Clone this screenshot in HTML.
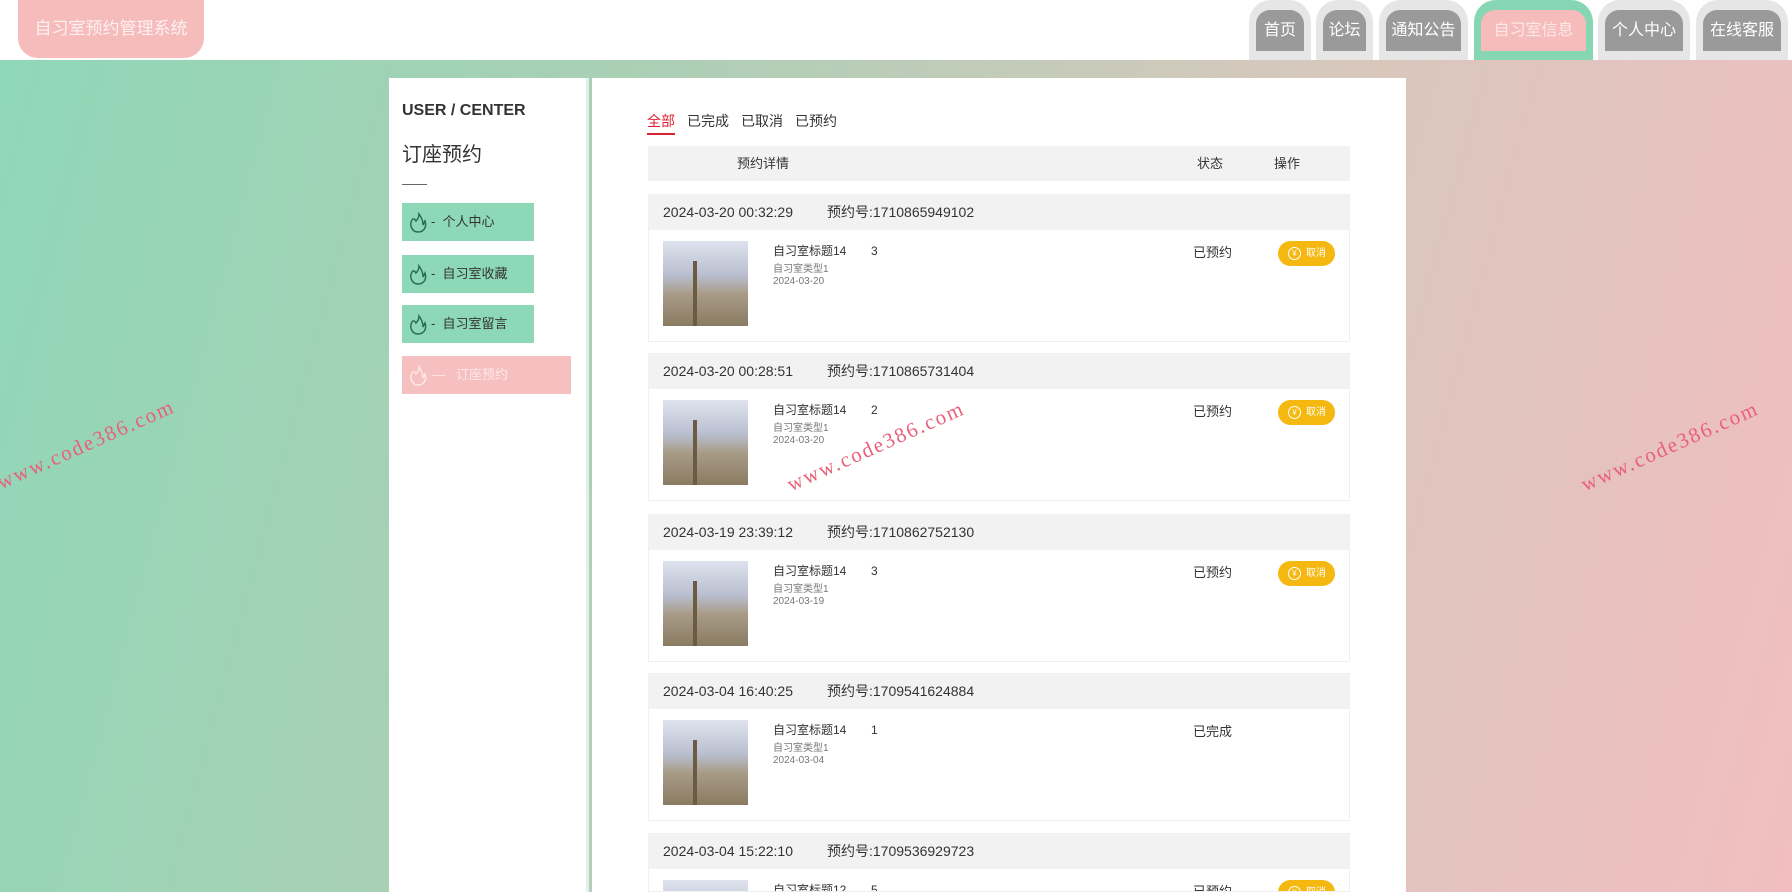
<!DOCTYPE html>
<html style="width:1792px;height:892px;overflow:hidden"><head><meta charset="utf-8"><style>
*{margin:0;padding:0;box-sizing:border-box}
body{width:1792px;height:892px;overflow:hidden;font-family:"Liberation Sans","Noto Sans CJK SC",sans-serif;color:#333;background:linear-gradient(105deg,#8ed8b8 0%,#a8d0b4 30%,#d6c8bc 65%,#f2bec0 100%);position:relative}
.hdr{position:absolute;left:0;top:0;width:1792px;height:60px;background:#fff}
.logo{position:absolute;left:18px;top:0;width:186px;height:58px;background:#f6bcbc;border-radius:0 0 20px 20px;color:#fdf0f0;font-size:17px;line-height:58px;text-align:center}
.tab{position:absolute;top:0;height:60px;background:#e6e6e6;border-radius:22px 22px 0 0}
.tab span{position:absolute;left:7px;right:7px;top:10px;height:41px;background:#9a9a9a;border-radius:14px 14px 0 0;color:#fff;font-size:16px;line-height:41px;text-align:center}
.tab.on{background:#86d6b4}.tab.on span{background:#f6bcbc;color:#fde8e8}
.side{position:absolute;left:389px;top:78px;width:200px;height:814px;background:#fff;border-right:3px solid #dff0ee}
.main{position:absolute;left:592px;top:78px;width:814px;height:814px;background:#fff;overflow:hidden}
.uc{position:absolute;left:13px;top:24px;font-weight:bold;font-size:16px;color:#333}
.tt{position:absolute;left:13px;top:60px;font-size:20px;color:#333}
.ln{position:absolute;left:13px;top:106px;width:25px;border-top:1px solid #666}
.mi{position:absolute;left:13px;width:132px;height:38px;background:#8dd8b6;font-size:13px;line-height:38px;padding-left:29px;color:#333}
.mi i{position:absolute;left:6px;top:8px;width:20px;height:22px}
.mi.on{background:#f6c0c0;width:169px;color:#fde8e8;padding-left:30px}
.tabs{position:absolute;left:55px;top:33px;font-size:14px}
.tabs b{font-weight:normal;margin-right:12px;display:inline-block;padding-bottom:2px}
.tabs b.a{color:#d23;border-bottom:2px solid #d23}
.th{position:absolute;left:56px;top:68px;width:702px;height:35px;background:#f2f2f2;font-size:13px;line-height:35px}
.card{position:absolute;left:56px;width:702px;height:148px;border:1px solid #f0f0f0;overflow:hidden}
.ch{height:35px;background:#f2f2f2;font-size:14px;line-height:35px;padding-left:14px}
.img{position:absolute;left:14px;top:46px;width:85px;height:85px;background:linear-gradient(180deg,#dfe3ee 0%,#b9bfd0 40%,#a89c88 62%,#8a7a62 100%)}
.img:before{content:"";position:absolute;left:30px;top:20px;width:4px;height:65px;background:#6b5a44}
.t1{position:absolute;left:124px;top:47px;font-size:12px;color:#333}
.t2{position:absolute;left:124px;top:65px;font-size:10px;color:#777}
.t3{position:absolute;left:124px;top:81px;font-size:10px;color:#777}
.n{position:absolute;left:222px;top:49px;font-size:12px}
.st{position:absolute;left:544px;top:47px;font-size:13px}
.btn{position:absolute;left:629px;top:46px;width:57px;height:25px;background:#f5b811;border-radius:13px;color:#fff;font-size:10px;line-height:25px;padding-left:28px}
.btn:before{content:"¥";position:absolute;left:10px;top:6px;width:11px;height:11px;border:1px solid #fff;border-radius:50%;font-size:8px;line-height:11px;text-align:center}
.wm{position:absolute;color:#e8607a;font-family:"Liberation Serif",serif;font-size:21px;letter-spacing:2px;transform:rotate(-24deg);white-space:nowrap}
</style></head><body>
<div class="hdr">
<div class="logo">自习室预约管理系统</div>
<div class="tab" style="left:1249px;width:62px"><span>首页</span></div>
<div class="tab" style="left:1316px;width:57px"><span>论坛</span></div>
<div class="tab" style="left:1379px;width:89px"><span>通知公告</span></div>
<div class="tab on" style="left:1474px;width:119px"><span>自习室信息</span></div>
<div class="tab" style="left:1598px;width:92px"><span>个人中心</span></div>
<div class="tab" style="left:1696px;width:92px"><span>在线客服</span></div>
</div>
<div class="side">
<div class="uc">USER / CENTER</div>
<div class="tt">订座预约</div>
<div class="ln"></div>
<div class="mi" style="top:125px"><i><svg width="20" height="22" viewBox="0 0 20 22" fill="none" stroke="#2c6e52" stroke-width="1.5"><path d="M4 8c-3 5 0 12 6 12s9-5 7-11l-2 4c0-5-2-8-4-11 0 4-2 6-3 7C7 7 5 6 4 8z"/></svg></i>-&nbsp; 个人中心</div>
<div class="mi" style="top:177px"><i><svg width="20" height="22" viewBox="0 0 20 22" fill="none" stroke="#2c6e52" stroke-width="1.5"><path d="M4 8c-3 5 0 12 6 12s9-5 7-11l-2 4c0-5-2-8-4-11 0 4-2 6-3 7C7 7 5 6 4 8z"/></svg></i>-&nbsp; 自习室收藏</div>
<div class="mi" style="top:227px"><i><svg width="20" height="22" viewBox="0 0 20 22" fill="none" stroke="#2c6e52" stroke-width="1.5"><path d="M4 8c-3 5 0 12 6 12s9-5 7-11l-2 4c0-5-2-8-4-11 0 4-2 6-3 7C7 7 5 6 4 8z"/></svg></i>-&nbsp; 自习室留言</div>
<div class="mi on" style="top:278px"><i><svg width="20" height="22" viewBox="0 0 20 22" fill="none" stroke="#fde8e8" stroke-width="1.5"><path d="M4 8c-3 5 0 12 6 12s9-5 7-11l-2 4c0-5-2-8-4-11 0 4-2 6-3 7C7 7 5 6 4 8z"/></svg></i>— &nbsp;&nbsp;订座预约</div>
</div>
<div class="main">
<div class="tabs"><b class="a">全部</b><b>已完成</b><b>已取消</b><b>已预约</b></div>
<div class="th"><span style="position:absolute;left:89px">预约详情</span><span style="position:absolute;left:549px">状态</span><span style="position:absolute;left:626px">操作</span></div>
<div class="card" style="top:116px"><div class="ch">2024-03-20 00:32:29<span style="margin-left:34px">预约号:1710865949102</span></div><div class="img"></div><div class="t1">自习室标题14</div><div class="t2">自习室类型1</div><div class="t3">2024-03-20</div><div class="n">3</div><div class="st">已预约</div><div class="btn">取消</div></div>
<div class="card" style="top:275px"><div class="ch">2024-03-20 00:28:51<span style="margin-left:34px">预约号:1710865731404</span></div><div class="img"></div><div class="t1">自习室标题14</div><div class="t2">自习室类型1</div><div class="t3">2024-03-20</div><div class="n">2</div><div class="st">已预约</div><div class="btn">取消</div></div>
<div class="card" style="top:436px"><div class="ch">2024-03-19 23:39:12<span style="margin-left:34px">预约号:1710862752130</span></div><div class="img"></div><div class="t1">自习室标题14</div><div class="t2">自习室类型1</div><div class="t3">2024-03-19</div><div class="n">3</div><div class="st">已预约</div><div class="btn">取消</div></div>
<div class="card" style="top:595px"><div class="ch">2024-03-04 16:40:25<span style="margin-left:34px">预约号:1709541624884</span></div><div class="img"></div><div class="t1">自习室标题14</div><div class="t2">自习室类型1</div><div class="t3">2024-03-04</div><div class="n">1</div><div class="st">已完成</div></div>
<div class="card" style="top:755px;height:59px"><div class="ch">2024-03-04 15:22:10<span style="margin-left:34px">预约号:1709536929723</span></div><div class="img"></div><div class="t1">自习室标题12</div><div class="n">5</div><div class="st">已预约</div><div class="btn">取消</div></div>
</div>
<div class="wm" style="left:-10px;top:432px">www.code386.com</div>
<div class="wm" style="left:780px;top:434px">www.code386.com</div>
<div class="wm" style="left:1574px;top:434px">www.code386.com</div>
</body></html>
